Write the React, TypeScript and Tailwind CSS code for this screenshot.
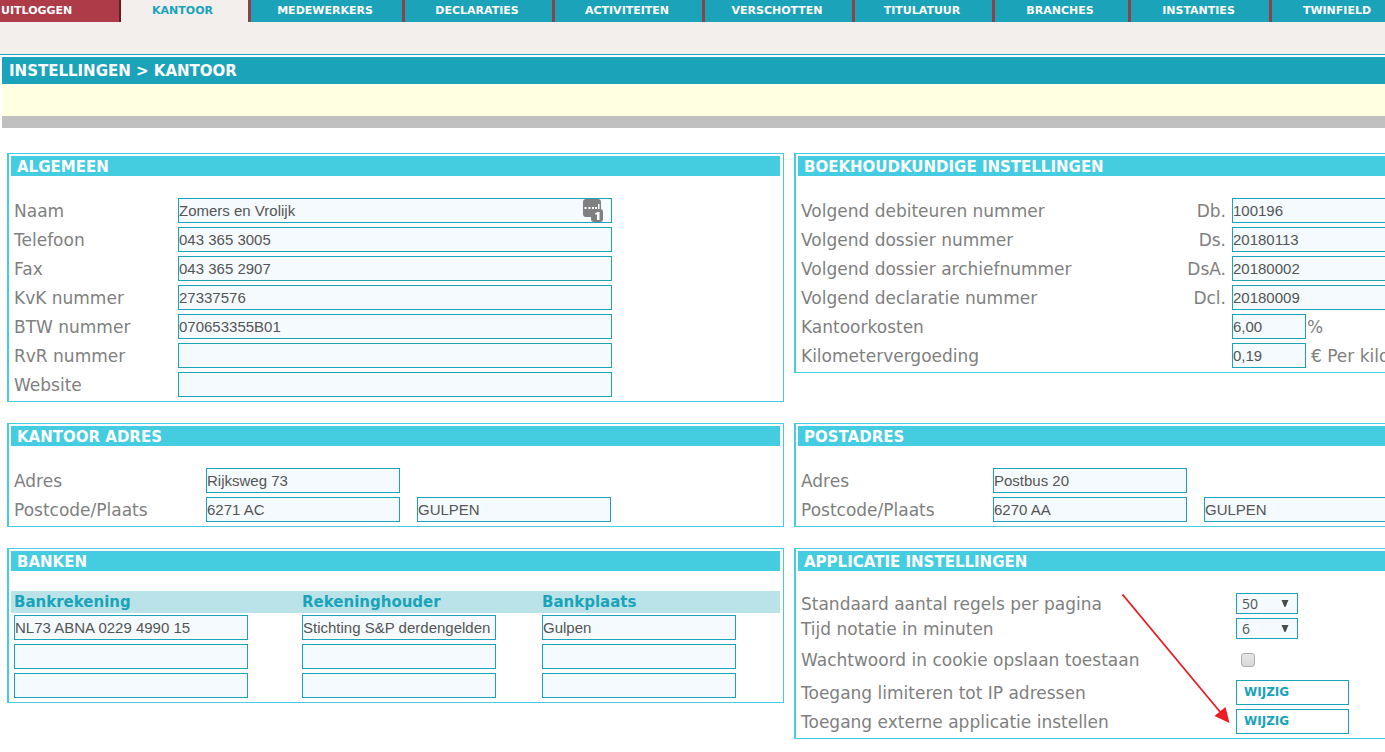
import React from "react";

const tabs = [
  { label: "MEDEWERKERS", width: "w-[154px]" },
  { label: "DECLARATIES", width: "w-[150px]" },
  { label: "ACTIVITEITEN", width: "w-[150px]" },
  { label: "VERSCHOTTEN", width: "w-[150px]" },
  { label: "TITULATUUR", width: "w-[140px]" },
  { label: "BRANCHES", width: "w-[136px]" },
  { label: "INSTANTIES", width: "w-[141px]" },
  { label: "TWINFIELD", width: "w-[136px]" },
];

const fieldBox =
  "block h-[25px] border border-[#1aa3b9] bg-[#f4fafd] font-['Liberation_Sans',Arial,sans-serif] text-[15px] text-[#555] outline-none";

function Field({ id, label, value = "", className }: { id?: string; label?: string; value?: string; className: string }) {
  return <input id={id} aria-label={label} type="text" defaultValue={value} className={`${fieldBox} ${className}`} />;
}

function Panel({ title, children }: { title: string; children: React.ReactNode }) {
  return (
    <section className="relative self-start border border-l-2 border-[#44cce0] bg-white py-[2px] pr-[3px] pl-[2px]">
      <h2 className="mb-5 h-5 bg-[#44cce0] pl-[6px] text-[15px] leading-[22px] font-bold text-white">{title}</h2>
      {children}
    </section>
  );
}

function Row({ id, label, labelWidth, suffix, children }: { id: string; label: string; labelWidth: string; suffix?: string; children: React.ReactNode }) {
  return (
    <div className="flex h-[29px] items-center pl-[3px]">
      <label htmlFor={id} className={`flex shrink-0 justify-between pr-[6px] ${labelWidth}`}>
        <span>{label}</span>
        {suffix && <span>{suffix}</span>}
      </label>
      {children}
    </div>
  );
}

function SelectBox({ id, options }: { id: string; options: string[] }) {
  return (
    <div className="relative">
      <select
        id={id}
        className="block h-[21px] w-[62px] appearance-none border border-[#1aa3b9] bg-[#f4fafd] pl-[5px] font-['Open_Sans','Noto_Sans',sans-serif] text-[14px] leading-[19px] text-[#555] outline-none"
      >
        {options.map((o) => (
          <option key={o}>{o}</option>
        ))}
      </select>
      <svg className="pointer-events-none absolute top-[7px] right-[9px]" width="8" height="7" viewBox="0 0 8 7">
        <path d="M.5 0h7L4.500 7h-1z" fill="#4b4b46" />
      </svg>
    </div>
  );
}

function PasswordManagerIcon() {
  return (
    <svg className="pointer-events-none absolute top-px right-[8px]" width="21" height="23" viewBox="0 0 21 23">
      <path d="M3 0h12a3 3 0 0 1 3 3v7h-8v8H3a3 3 0 0 1-3-3V3a3 3 0 0 1 3-3z" fill="#808080" />
      <rect x="8" y="10" width="12" height="13" rx="3" fill="#808080" />
      <path d="M1.500 8h2v2h-2zM5.500 8h2v2h-2zM9 8h2v2h-2zM12 8h2v2h-2zM15 5h1.500v5h-1.500z" fill="#fff" />
      <path d="M12 14.500l2.500-1.500h2v8h-2.500v-5.500h-2z" fill="#fff" />
    </svg>
  );
}

const general = [
  ["naam", "Naam", "Zomers en Vrolijk"],
  ["telefoon", "Telefoon", "043 365 3005"],
  ["fax", "Fax", "043 365 2907"],
  ["kvk", "KvK nummer", "27337576"],
  ["btw", "BTW nummer", "070653355B01"],
  ["rvr", "RvR nummer", ""],
  ["website", "Website", ""],
];

const counters = [
  ["debiteur", "Volgend debiteuren nummer", "Db.", "100196"],
  ["dossier", "Volgend dossier nummer", "Ds.", "20180113"],
  ["archief", "Volgend dossier archiefnummer", "DsA.", "20180002"],
  ["declaratie", "Volgend declaratie nummer", "Dcl.", "20180009"],
];

const banks = [
  ["NL73 ABNA 0229 4990 15", "Stichting S&P derdengelden", "Gulpen"],
  ["", "", ""],
  ["", "", ""],
];

function Address({ prefix, street, zip, city }: { prefix: string; street: string; zip: string; city: string }) {
  return (
    <>
      <Row id={`${prefix}-adres`} label="Adres" labelWidth="w-[192px]">
        <Field id={`${prefix}-adres`} value={street} className="w-[194px]" />
      </Row>
      <Row id={`${prefix}-postcode`} label="Postcode/Plaats" labelWidth="w-[192px]">
        <Field id={`${prefix}-postcode`} value={zip} className="mr-[17px] w-[194px]" />
        <Field label="Plaats" value={city} className="w-[194px]" />
      </Row>
    </>
  );
}

const changeButton =
  "h-[25px] w-[113px] border border-[#1aa3b9] bg-white pb-[2px] pl-[7px] text-left text-[12px] leading-[14px] font-bold text-[#1aa3b9]";

export default function App() {
  return (
    <div className="min-h-screen overflow-hidden bg-white font-['DejaVu_Sans',Verdana,sans-serif] text-[17px] leading-5 text-[#808080]">
      <nav className="flex h-[22px] text-[11px] leading-[21px] font-bold text-white">
        <a href="#uitloggen" className="w-[121px] shrink-0 border-r-2 border-[#6b1a20] bg-[#ad3c48] pl-px">
          UITLOGGEN
        </a>
        <a href="#kantoor" aria-current="page" className="w-[127px] shrink-0 bg-[#f3efec] pr-1 text-center text-[#1aa3b9]">
          KANTOOR
        </a>
        {tabs.map((t) => (
          <a
            key={t.label}
            href={`#${t.label.toLowerCase()}`}
            className={`shrink-0 border-l-3 border-[#8f4147] bg-[#1aa3b9] pr-[3px] text-center ${t.width}`}
          >
            {t.label}
          </a>
        ))}
      </nav>
      <div className="h-[33px] border-b border-[#1aa3b9] bg-[#f3efec]" />
      <div className="mt-[2px] ml-[2px]">
        <h1 className="h-[27px] bg-[#1aa3b9] pl-[7px] text-[15px] leading-[28px] font-bold text-white">INSTELLINGEN &gt; KANTOOR</h1>
        <div className="h-8 bg-[#ffffe1]" />
        <div className="h-3 bg-[#c0c0c0]" />
      </div>

      <main className="mt-[25px] ml-[7px] grid min-w-[1564px] grid-cols-2 gap-x-[10px] gap-y-[21px]">
        <Panel title="ALGEMEEN">
          {general.map(([id, label, value]) => (
            <Row key={id} id={id} label={label} labelWidth="w-[164px]">
              <div className="relative">
                <Field id={id} value={value} className="w-[434px]" />
                {id === "naam" && <PasswordManagerIcon />}
              </div>
            </Row>
          ))}
        </Panel>

        <Panel title="BOEKHOUDKUNDIGE INSTELLINGEN">
          {counters.map(([id, label, suffix, value]) => (
            <Row key={id} id={id} label={label} suffix={suffix} labelWidth="w-[431px]">
              <Field id={id} value={value} className="w-[194px]" />
            </Row>
          ))}
          <Row id="kosten" label="Kantoorkosten" labelWidth="w-[431px]">
            <Field id="kosten" value="6,00" className="w-[74px]" />
            <span className="pl-px">%</span>
          </Row>
          <Row id="km" label="Kilometervergoeding" labelWidth="w-[431px]">
            <Field id="km" value="0,19" className="w-[74px]" />
            <span className="pl-[5px]">€ Per kilometer</span>
          </Row>
        </Panel>

        <Panel title="KANTOOR ADRES">
          <Address prefix="kantoor" street="Rijksweg 73" zip="6271 AC" city="GULPEN" />
        </Panel>

        <Panel title="POSTADRES">
          <Address prefix="post" street="Postbus 20" zip="6270 AA" city="GULPEN" />
        </Panel>

        <Panel title="BANKEN">
          <table className="w-full table-fixed border-collapse">
            <thead>
              <tr className="h-[22px] bg-[#b9e3e9] text-left text-[15px] leading-[22px] text-[#1aa3b9]">
                <th className="w-[288px] p-0 pl-[3px]">Bankrekening</th>
                <th className="w-[240px] p-0 pl-[3px]">Rekeninghouder</th>
                <th className="p-0 pl-[3px]">Bankplaats</th>
              </tr>
            </thead>
            <tbody>
              {banks.map(([account, holder, city], i) => (
                <tr key={i} className="h-[29px]">
                  <td className="p-0 pl-[3px]">
                    <Field label="Bankrekening" value={account} className="w-[234px]" />
                  </td>
                  <td className="p-0 pl-[3px]">
                    <Field label="Rekeninghouder" value={holder} className="w-[194px]" />
                  </td>
                  <td className="p-0 pl-[3px]">
                    <Field label="Bankplaats" value={city} className="w-[194px]" />
                  </td>
                </tr>
              ))}
            </tbody>
          </table>
        </Panel>

        <Panel title="APPLICATIE INSTELLINGEN">
          <div className="flex h-[25px] items-center pl-[3px]">
            <label htmlFor="regels" className="w-[435px]">Standaard aantal regels per pagina</label>
            <SelectBox id="regels" options={["50", "100"]} />
          </div>
          <div className="flex h-[25px] items-center pl-[3px]">
            <label htmlFor="tijd" className="w-[435px]">Tijd notatie in minuten</label>
            <SelectBox id="tijd" options={["6", "10"]} />
          </div>
          <div className="flex h-[37px] items-center pl-[3px]">
            <label htmlFor="cookie" className="w-[440px]">Wachtwoord in cookie opslaan toestaan</label>
            <input
              id="cookie"
              type="checkbox"
              className="size-[14px] appearance-none rounded-[3px] border border-[#adadad] bg-linear-to-b from-[#e6e6e6] to-[#d8d8d8] checked:bg-[#1aa3b9]"
            />
          </div>
          <div className="flex h-[29px] items-center pl-[3px]">
            <span id="ip-label" className="w-[435px]">Toegang limiteren tot IP adressen</span>
            <button type="button" aria-describedby="ip-label" className={changeButton}>WIJZIG</button>
          </div>
          <div className="flex h-[29px] items-center pl-[3px]">
            <span id="extern-label" className="w-[435px]">Toegang externe applicatie instellen</span>
            <button type="button" aria-describedby="extern-label" className={changeButton}>WIJZIG</button>
          </div>
          <svg className="pointer-events-none absolute top-[45px] left-[326px]" width="110" height="132" viewBox="0 0 110 132">
            <path d="M.5 .5L99 119" stroke="#ed1c24" strokeWidth="1.800" />
            <path d="M107.500 129L92.500 122L103.500 113z" fill="#ed1c24" />
          </svg>
        </Panel>
      </main>
    </div>
  );
}
